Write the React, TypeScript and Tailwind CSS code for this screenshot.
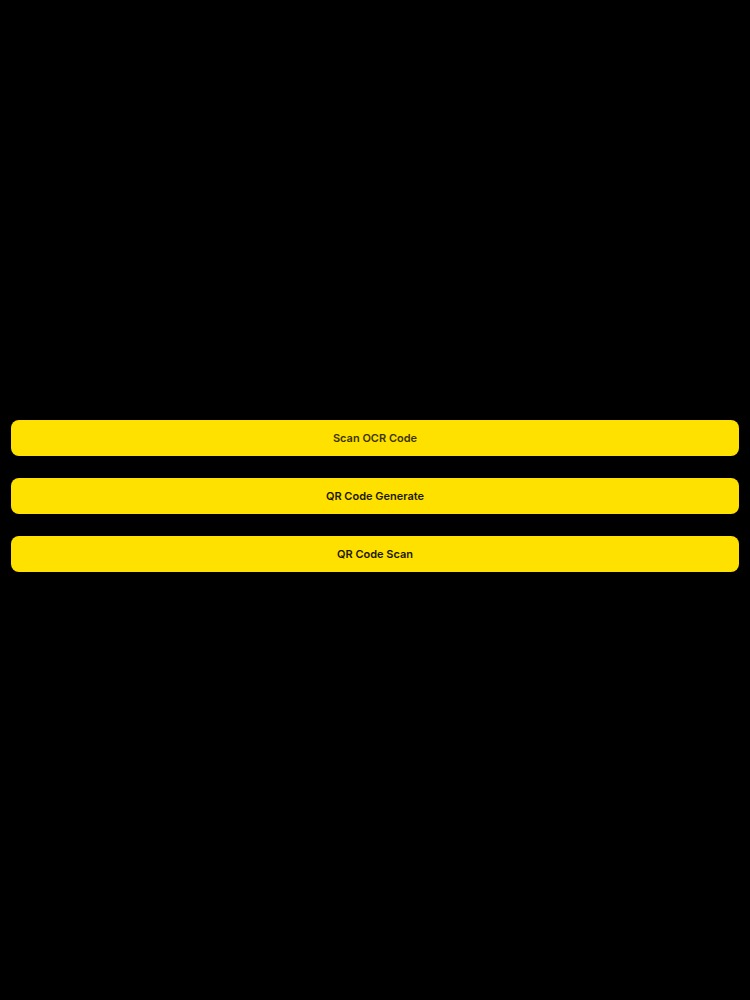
export default function App() {
  const items = [
    { label: "Scan OCR Code", cls: "text-[#3d3500]" },
    { label: "QR Code Generate", cls: "text-[#1c1800]" },
    { label: "QR Code Scan", cls: "text-[#1c1800]" },
  ];
  return (
    <div
      className="w-[750px] h-[1000px] bg-black flex flex-col gap-[22px] px-[11px] pt-[420px]"
      style={{ fontFamily: "Inter, 'Noto Sans', sans-serif" }}
    >
      {items.map((it) => (
        <button
          key={it.label}
          className={`h-[36px] w-full rounded-[8px] bg-[#ffe100] text-[11px] font-semibold flex items-center justify-center ${it.cls}`}
        >
          {it.label}
        </button>
      ))}
    </div>
  );
}
